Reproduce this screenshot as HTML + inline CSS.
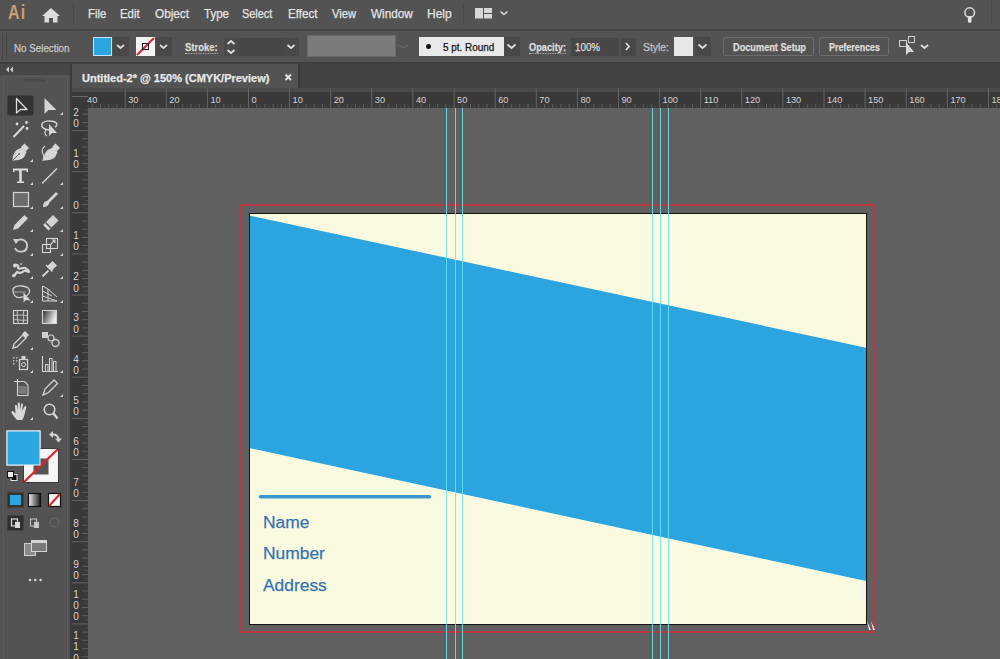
<!DOCTYPE html>
<html><head><meta charset="utf-8">
<style>
*{margin:0;padding:0;box-sizing:border-box}
html,body{width:1000px;height:659px;overflow:hidden;background:#535353;font-family:"Liberation Sans",sans-serif;position:relative}
.a{position:absolute}
.t{position:absolute;white-space:nowrap;color:#e4e4e4;font-size:12px;line-height:14px;-webkit-text-stroke:0.25px currentColor}
.c{font-size:11px;color:#dedede}
.b{font-weight:bold}
.chev{position:absolute;width:16px;height:19px;background:#484848}
.dot{border-bottom:1px dotted #bdbdbd}
</style></head><body>
<!-- ===== MENU BAR ===== -->
<div class="a" style="left:0;top:0;width:1000px;height:29px;background:#535353"></div>
<div class="a" style="left:0;top:29px;width:1000px;height:2px;background:#454545"></div>
<div class="a" style="left:7px;top:1px;width:26px;height:24px;background:#515450"></div>
<div class="t" style="left:8px;top:1px;font-size:21px;line-height:22px;font-weight:bold;color:#cf9c76;-webkit-text-stroke:0;letter-spacing:1.5px;transform:scaleX(0.76);transform-origin:0 0">Ai</div>
<div class="a" style="left:73px;top:3px;width:1px;height:22px;background:#484848"></div>
<div class="t" style="left:88px;top:7px;transform:scaleX(0.94);transform-origin:0 0">File</div>
<div class="t" style="left:120px;top:7px;transform:scaleX(0.95);transform-origin:0 0">Edit</div>
<div class="t" style="left:155px;top:7px;transform:scaleX(0.98);transform-origin:0 0">Object</div>
<div class="t" style="left:204px;top:7px;transform:scaleX(0.96);transform-origin:0 0">Type</div>
<div class="t" style="left:242px;top:7px;transform:scaleX(0.91);transform-origin:0 0">Select</div>
<div class="t" style="left:288px;top:7px;transform:scaleX(0.97);transform-origin:0 0">Effect</div>
<div class="t" style="left:332px;top:7px;transform:scaleX(0.93);transform-origin:0 0">View</div>
<div class="t" style="left:371px;top:7px;transform:scaleX(0.98);transform-origin:0 0">Window</div>
<div class="t" style="left:427px;top:7px">Help</div>
<div class="a" style="left:463px;top:3px;width:1px;height:22px;background:#4a4a4a"></div>
<div class="a" style="left:991px;top:0px;width:1px;height:24px;background:#4a4a4a"></div>
<svg class="a" style="left:0;top:0" width="1000" height="31">
 <!-- home -->
 <path d="M51,8 L60,16 L57.5,16 L57.5,22.5 L53,22.5 L53,18 L49,18 L49,22.5 L44.5,22.5 L44.5,16 L42,16 Z" fill="#dcdcdc"/>
 <!-- workspace -->
 <rect x="475" y="8" width="8" height="10.5" fill="#d8d8d8"/>
 <rect x="484" y="8" width="8" height="5" fill="#d8d8d8"/>
 <rect x="484" y="14" width="8" height="4.5" fill="#d8d8d8"/>
 <path d="M500.5,11.5 L504,14.5 L507.5,11.5" fill="none" stroke="#dcdcdc" stroke-width="1.6"/>
 <!-- bulb -->
 <circle cx="969.7" cy="12.6" r="4.8" fill="none" stroke="#d8d8d8" stroke-width="1.6"/>
 <path d="M966.5,16 L969.7,19 L972.9,16 Z" fill="#d8d8d8"/><rect x="967.9" y="17" width="3.6" height="5.8" rx="1.6" fill="#e4e4e4"/>
</svg>
<!-- ===== CONTROL BAR ===== -->
<div class="a" style="left:0;top:31px;width:1000px;height:31px;background:#535353"></div>
<div class="a" style="left:0;top:62px;width:1000px;height:2px;background:#3f3f3f"></div>
<div class="a" style="left:2px;top:33px;width:1px;height:27px;background:#474747"></div>
<div class="a" style="left:6px;top:33px;width:1px;height:27px;background:#474747"></div>
<div class="t c" style="left:14px;top:41px;color:#c8c8c8;transform:scaleX(0.89);transform-origin:0 0">No Selection</div>
<div class="a" style="left:93px;top:37px;width:19px;height:19px;background:#2ca6e2;border:1px solid #bfe6fa"></div>
<div class="chev" style="left:113px;top:37px"></div>
<div class="a" style="left:136px;top:37px;width:19px;height:19px;background:#f4f4f4"></div>
<svg class="a" style="left:136px;top:37px" width="19" height="19"><line x1="1" y1="18" x2="18" y2="1" stroke="#e0202a" stroke-width="2"/><rect x="6.5" y="6.5" width="6" height="6" fill="none" stroke="#222" stroke-width="1"/></svg>
<div class="chev" style="left:156px;top:37px"></div>
<div class="t c b dot" style="left:185px;top:41px;line-height:12px;transform:scaleX(0.86);transform-origin:0 0">Stroke:</div>
<div class="a" style="left:224px;top:38px;width:15px;height:18px;background:#4a4a4a"></div>
<div class="a" style="left:239px;top:38px;width:44px;height:18px;background:#464646"></div>
<div class="chev" style="left:283px;top:38px;height:18px"></div>
<div class="a" style="left:307px;top:35px;width:89px;height:22px;background:#7b7b7b;border:1px solid #6a6a6a"></div>
<div class="a" style="left:419px;top:37px;width:85px;height:19px;background:#e9e9e9"></div>
<div class="a" style="left:426px;top:44px;width:5px;height:5px;border-radius:50%;background:#111"></div>
<div class="t c" style="left:443px;top:40px;color:#111;transform:scaleX(0.9);transform-origin:0 0">5 pt. Round</div>
<div class="chev" style="left:504px;top:37px"></div>
<div class="t c b dot" style="left:529px;top:41px;line-height:12px;transform:scaleX(0.84);transform-origin:0 0">Opacity:</div>
<div class="a" style="left:571px;top:38px;width:48px;height:18px;background:#474747"></div>
<div class="t c" style="left:575px;top:40px;transform:scaleX(0.89);transform-origin:0 0">100%</div>
<div class="chev" style="left:621px;top:38px;height:18px;width:15px"></div>
<div class="t c" style="left:643px;top:41px;line-height:12px;color:#c4c4c4;transform:scaleX(0.945);transform-origin:0 0">Style:</div>
<div class="a" style="left:674px;top:37px;width:19px;height:19px;background:#e8e8e8"></div>
<div class="chev" style="left:695px;top:37px"></div>
<div class="a" style="left:723px;top:37px;width:91px;height:19px;border:1px solid #6c6c6c;border-radius:2px"></div>
<div class="t c b" style="left:733px;top:40px;transform:scaleX(0.835);transform-origin:0 0">Document Setup</div>
<div class="a" style="left:819px;top:37px;width:70px;height:19px;border:1px solid #6c6c6c;border-radius:2px"></div>
<div class="t c b" style="left:829px;top:40px;transform:scaleX(0.81);transform-origin:0 0">Preferences</div>
<svg class="a" style="left:0;top:31px" width="1000" height="31">
 <g fill="none" stroke="#dcdcdc" stroke-width="1.8">
  <path d="M117,14 L120.5,17 L124,14"/>
  <path d="M160,14 L163.5,17 L167,14"/>
  <path d="M227.5,13 L231,10 L234.5,13"/>
  <path d="M227.5,19 L231,22 L234.5,19"/>
  <path d="M287.5,14 L291,17 L294.5,14"/>
  <path d="M507.5,13.5 L511.5,17 L515.5,13.5"/>
  <path d="M626,12 L629,15.5 L626,19"/>
  <path d="M698.5,13.5 L702.5,17 L706.5,13.5"/>
  <path d="M921,14 L924.5,17 L928,14"/>
 </g>
 <path d="M399,14 L403.5,17 L408,14" fill="none" stroke="#6a6a6a" stroke-width="1.3"/>
 <!-- arrange icon -->
 <g fill="none" stroke="#d0d0d0" stroke-width="1">
  <rect x="899.5" y="9.5" width="7" height="6"/>
  <rect x="908.5" y="5.5" width="6" height="6"/>
 </g>
 <path d="M906,11 L906,24 L909,21 L914,21 Z" fill="#d8d8d8"/>
</svg>
<!-- ===== TAB ROW ===== -->
<div class="a" style="left:0;top:64px;width:1000px;height:28px;background:#424242"></div>
<div class="a" style="left:72px;top:64px;width:226px;height:25px;background:#535353"></div>
<div class="a" style="left:298px;top:64px;width:2px;height:25px;background:#3a3a3a"></div>
<div class="a" style="left:72px;top:88px;width:928px;height:4px;background:#494949"></div>
<div class="t c b" style="left:82px;top:71px;color:#e8e8e8">Untitled-2* @ 150% (CMYK/Preview)</div>
<svg class="a" style="left:284px;top:73px" width="9" height="9"><path d="M1.5,1.5 L7,7 M7,1.5 L1.5,7" stroke="#e8e8e8" stroke-width="1.8"/></svg>
<!-- ===== CANVAS ===== -->
<div class="a" style="left:88px;top:108px;width:912px;height:551px;background:#606060"></div>
<!-- rulers -->
<svg class="a" style="left:0;top:0" width="1000" height="659" font-family="Liberation Sans" font-size="9.2" fill="#d4d4d4">
 <rect x="72" y="92" width="928" height="16" fill="#393939"/>
 <rect x="72" y="92" width="16" height="567" fill="#393939"/>
<line x1="88.2" y1="105.5" x2="88.2" y2="108" stroke="#4c4c4c" stroke-width="1"/>
<line x1="92.3" y1="104" x2="92.3" y2="108" stroke="#5e5e5e" stroke-width="1"/>
<line x1="96.4" y1="105.5" x2="96.4" y2="108" stroke="#4c4c4c" stroke-width="1"/>
<line x1="100.5" y1="104" x2="100.5" y2="108" stroke="#5e5e5e" stroke-width="1"/>
<line x1="104.6" y1="105.5" x2="104.6" y2="108" stroke="#4c4c4c" stroke-width="1"/>
<line x1="108.7" y1="104" x2="108.7" y2="108" stroke="#5e5e5e" stroke-width="1"/>
<line x1="112.8" y1="105.5" x2="112.8" y2="108" stroke="#4c4c4c" stroke-width="1"/>
<line x1="116.9" y1="104" x2="116.9" y2="108" stroke="#5e5e5e" stroke-width="1"/>
<line x1="121.1" y1="105.5" x2="121.1" y2="108" stroke="#4c4c4c" stroke-width="1"/>
<text x="87.1" y="103.2">40</text>
<line x1="125.2" y1="88" x2="125.2" y2="108" stroke="#646464" stroke-width="1"/>
<line x1="129.3" y1="105.5" x2="129.3" y2="108" stroke="#4c4c4c" stroke-width="1"/>
<line x1="133.4" y1="104" x2="133.4" y2="108" stroke="#5e5e5e" stroke-width="1"/>
<line x1="137.5" y1="105.5" x2="137.5" y2="108" stroke="#4c4c4c" stroke-width="1"/>
<line x1="141.6" y1="104" x2="141.6" y2="108" stroke="#5e5e5e" stroke-width="1"/>
<line x1="145.7" y1="105.5" x2="145.7" y2="108" stroke="#4c4c4c" stroke-width="1"/>
<line x1="149.8" y1="104" x2="149.8" y2="108" stroke="#5e5e5e" stroke-width="1"/>
<line x1="153.9" y1="105.5" x2="153.9" y2="108" stroke="#4c4c4c" stroke-width="1"/>
<line x1="158.1" y1="104" x2="158.1" y2="108" stroke="#5e5e5e" stroke-width="1"/>
<line x1="162.2" y1="105.5" x2="162.2" y2="108" stroke="#4c4c4c" stroke-width="1"/>
<text x="128.2" y="103.2">30</text>
<line x1="166.3" y1="88" x2="166.3" y2="108" stroke="#646464" stroke-width="1"/>
<line x1="170.4" y1="105.5" x2="170.4" y2="108" stroke="#4c4c4c" stroke-width="1"/>
<line x1="174.5" y1="104" x2="174.5" y2="108" stroke="#5e5e5e" stroke-width="1"/>
<line x1="178.6" y1="105.5" x2="178.6" y2="108" stroke="#4c4c4c" stroke-width="1"/>
<line x1="182.7" y1="104" x2="182.7" y2="108" stroke="#5e5e5e" stroke-width="1"/>
<line x1="186.8" y1="105.5" x2="186.8" y2="108" stroke="#4c4c4c" stroke-width="1"/>
<line x1="190.9" y1="104" x2="190.9" y2="108" stroke="#5e5e5e" stroke-width="1"/>
<line x1="195.1" y1="105.5" x2="195.1" y2="108" stroke="#4c4c4c" stroke-width="1"/>
<line x1="199.2" y1="104" x2="199.2" y2="108" stroke="#5e5e5e" stroke-width="1"/>
<line x1="203.3" y1="105.5" x2="203.3" y2="108" stroke="#4c4c4c" stroke-width="1"/>
<text x="169.3" y="103.2">20</text>
<line x1="207.4" y1="88" x2="207.4" y2="108" stroke="#646464" stroke-width="1"/>
<line x1="211.5" y1="105.5" x2="211.5" y2="108" stroke="#4c4c4c" stroke-width="1"/>
<line x1="215.6" y1="104" x2="215.6" y2="108" stroke="#5e5e5e" stroke-width="1"/>
<line x1="219.7" y1="105.5" x2="219.7" y2="108" stroke="#4c4c4c" stroke-width="1"/>
<line x1="223.8" y1="104" x2="223.8" y2="108" stroke="#5e5e5e" stroke-width="1"/>
<line x1="227.9" y1="105.5" x2="227.9" y2="108" stroke="#4c4c4c" stroke-width="1"/>
<line x1="232.1" y1="104" x2="232.1" y2="108" stroke="#5e5e5e" stroke-width="1"/>
<line x1="236.2" y1="105.5" x2="236.2" y2="108" stroke="#4c4c4c" stroke-width="1"/>
<line x1="240.3" y1="104" x2="240.3" y2="108" stroke="#5e5e5e" stroke-width="1"/>
<line x1="244.4" y1="105.5" x2="244.4" y2="108" stroke="#4c4c4c" stroke-width="1"/>
<text x="210.4" y="103.2">10</text>
<line x1="248.5" y1="88" x2="248.5" y2="108" stroke="#646464" stroke-width="1"/>
<line x1="252.6" y1="105.5" x2="252.6" y2="108" stroke="#4c4c4c" stroke-width="1"/>
<line x1="256.7" y1="104" x2="256.7" y2="108" stroke="#5e5e5e" stroke-width="1"/>
<line x1="260.8" y1="105.5" x2="260.8" y2="108" stroke="#4c4c4c" stroke-width="1"/>
<line x1="264.9" y1="104" x2="264.9" y2="108" stroke="#5e5e5e" stroke-width="1"/>
<line x1="269.1" y1="105.5" x2="269.1" y2="108" stroke="#4c4c4c" stroke-width="1"/>
<line x1="273.2" y1="104" x2="273.2" y2="108" stroke="#5e5e5e" stroke-width="1"/>
<line x1="277.3" y1="105.5" x2="277.3" y2="108" stroke="#4c4c4c" stroke-width="1"/>
<line x1="281.4" y1="104" x2="281.4" y2="108" stroke="#5e5e5e" stroke-width="1"/>
<line x1="285.5" y1="105.5" x2="285.5" y2="108" stroke="#4c4c4c" stroke-width="1"/>
<text x="251.5" y="103.2">0</text>
<line x1="289.6" y1="88" x2="289.6" y2="108" stroke="#646464" stroke-width="1"/>
<line x1="293.7" y1="105.5" x2="293.7" y2="108" stroke="#4c4c4c" stroke-width="1"/>
<line x1="297.8" y1="104" x2="297.8" y2="108" stroke="#5e5e5e" stroke-width="1"/>
<line x1="301.9" y1="105.5" x2="301.9" y2="108" stroke="#4c4c4c" stroke-width="1"/>
<line x1="306.1" y1="104" x2="306.1" y2="108" stroke="#5e5e5e" stroke-width="1"/>
<line x1="310.2" y1="105.5" x2="310.2" y2="108" stroke="#4c4c4c" stroke-width="1"/>
<line x1="314.3" y1="104" x2="314.3" y2="108" stroke="#5e5e5e" stroke-width="1"/>
<line x1="318.4" y1="105.5" x2="318.4" y2="108" stroke="#4c4c4c" stroke-width="1"/>
<line x1="322.5" y1="104" x2="322.5" y2="108" stroke="#5e5e5e" stroke-width="1"/>
<line x1="326.6" y1="105.5" x2="326.6" y2="108" stroke="#4c4c4c" stroke-width="1"/>
<text x="292.6" y="103.2">10</text>
<line x1="330.7" y1="88" x2="330.7" y2="108" stroke="#646464" stroke-width="1"/>
<line x1="334.8" y1="105.5" x2="334.8" y2="108" stroke="#4c4c4c" stroke-width="1"/>
<line x1="338.9" y1="104" x2="338.9" y2="108" stroke="#5e5e5e" stroke-width="1"/>
<line x1="343.1" y1="105.5" x2="343.1" y2="108" stroke="#4c4c4c" stroke-width="1"/>
<line x1="347.2" y1="104" x2="347.2" y2="108" stroke="#5e5e5e" stroke-width="1"/>
<line x1="351.3" y1="105.5" x2="351.3" y2="108" stroke="#4c4c4c" stroke-width="1"/>
<line x1="355.4" y1="104" x2="355.4" y2="108" stroke="#5e5e5e" stroke-width="1"/>
<line x1="359.5" y1="105.5" x2="359.5" y2="108" stroke="#4c4c4c" stroke-width="1"/>
<line x1="363.6" y1="104" x2="363.6" y2="108" stroke="#5e5e5e" stroke-width="1"/>
<line x1="367.7" y1="105.5" x2="367.7" y2="108" stroke="#4c4c4c" stroke-width="1"/>
<text x="333.7" y="103.2">20</text>
<line x1="371.8" y1="88" x2="371.8" y2="108" stroke="#646464" stroke-width="1"/>
<line x1="375.9" y1="105.5" x2="375.9" y2="108" stroke="#4c4c4c" stroke-width="1"/>
<line x1="380.1" y1="104" x2="380.1" y2="108" stroke="#5e5e5e" stroke-width="1"/>
<line x1="384.2" y1="105.5" x2="384.2" y2="108" stroke="#4c4c4c" stroke-width="1"/>
<line x1="388.3" y1="104" x2="388.3" y2="108" stroke="#5e5e5e" stroke-width="1"/>
<line x1="392.4" y1="105.5" x2="392.4" y2="108" stroke="#4c4c4c" stroke-width="1"/>
<line x1="396.5" y1="104" x2="396.5" y2="108" stroke="#5e5e5e" stroke-width="1"/>
<line x1="400.6" y1="105.5" x2="400.6" y2="108" stroke="#4c4c4c" stroke-width="1"/>
<line x1="404.7" y1="104" x2="404.7" y2="108" stroke="#5e5e5e" stroke-width="1"/>
<line x1="408.8" y1="105.5" x2="408.8" y2="108" stroke="#4c4c4c" stroke-width="1"/>
<text x="374.8" y="103.2">30</text>
<line x1="412.9" y1="88" x2="412.9" y2="108" stroke="#646464" stroke-width="1"/>
<line x1="417.1" y1="105.5" x2="417.1" y2="108" stroke="#4c4c4c" stroke-width="1"/>
<line x1="421.2" y1="104" x2="421.2" y2="108" stroke="#5e5e5e" stroke-width="1"/>
<line x1="425.3" y1="105.5" x2="425.3" y2="108" stroke="#4c4c4c" stroke-width="1"/>
<line x1="429.4" y1="104" x2="429.4" y2="108" stroke="#5e5e5e" stroke-width="1"/>
<line x1="433.5" y1="105.5" x2="433.5" y2="108" stroke="#4c4c4c" stroke-width="1"/>
<line x1="437.6" y1="104" x2="437.6" y2="108" stroke="#5e5e5e" stroke-width="1"/>
<line x1="441.7" y1="105.5" x2="441.7" y2="108" stroke="#4c4c4c" stroke-width="1"/>
<line x1="445.8" y1="104" x2="445.8" y2="108" stroke="#5e5e5e" stroke-width="1"/>
<line x1="449.9" y1="105.5" x2="449.9" y2="108" stroke="#4c4c4c" stroke-width="1"/>
<text x="415.9" y="103.2">40</text>
<line x1="454.1" y1="88" x2="454.1" y2="108" stroke="#646464" stroke-width="1"/>
<line x1="458.2" y1="105.5" x2="458.2" y2="108" stroke="#4c4c4c" stroke-width="1"/>
<line x1="462.3" y1="104" x2="462.3" y2="108" stroke="#5e5e5e" stroke-width="1"/>
<line x1="466.4" y1="105.5" x2="466.4" y2="108" stroke="#4c4c4c" stroke-width="1"/>
<line x1="470.5" y1="104" x2="470.5" y2="108" stroke="#5e5e5e" stroke-width="1"/>
<line x1="474.6" y1="105.5" x2="474.6" y2="108" stroke="#4c4c4c" stroke-width="1"/>
<line x1="478.7" y1="104" x2="478.7" y2="108" stroke="#5e5e5e" stroke-width="1"/>
<line x1="482.8" y1="105.5" x2="482.8" y2="108" stroke="#4c4c4c" stroke-width="1"/>
<line x1="486.9" y1="104" x2="486.9" y2="108" stroke="#5e5e5e" stroke-width="1"/>
<line x1="491.0" y1="105.5" x2="491.0" y2="108" stroke="#4c4c4c" stroke-width="1"/>
<text x="457.1" y="103.2">50</text>
<line x1="495.2" y1="88" x2="495.2" y2="108" stroke="#646464" stroke-width="1"/>
<line x1="499.3" y1="105.5" x2="499.3" y2="108" stroke="#4c4c4c" stroke-width="1"/>
<line x1="503.4" y1="104" x2="503.4" y2="108" stroke="#5e5e5e" stroke-width="1"/>
<line x1="507.5" y1="105.5" x2="507.5" y2="108" stroke="#4c4c4c" stroke-width="1"/>
<line x1="511.6" y1="104" x2="511.6" y2="108" stroke="#5e5e5e" stroke-width="1"/>
<line x1="515.7" y1="105.5" x2="515.7" y2="108" stroke="#4c4c4c" stroke-width="1"/>
<line x1="519.8" y1="104" x2="519.8" y2="108" stroke="#5e5e5e" stroke-width="1"/>
<line x1="523.9" y1="105.5" x2="523.9" y2="108" stroke="#4c4c4c" stroke-width="1"/>
<line x1="528.0" y1="104" x2="528.0" y2="108" stroke="#5e5e5e" stroke-width="1"/>
<line x1="532.2" y1="105.5" x2="532.2" y2="108" stroke="#4c4c4c" stroke-width="1"/>
<text x="498.2" y="103.2">60</text>
<line x1="536.3" y1="88" x2="536.3" y2="108" stroke="#646464" stroke-width="1"/>
<line x1="540.4" y1="105.5" x2="540.4" y2="108" stroke="#4c4c4c" stroke-width="1"/>
<line x1="544.5" y1="104" x2="544.5" y2="108" stroke="#5e5e5e" stroke-width="1"/>
<line x1="548.6" y1="105.5" x2="548.6" y2="108" stroke="#4c4c4c" stroke-width="1"/>
<line x1="552.7" y1="104" x2="552.7" y2="108" stroke="#5e5e5e" stroke-width="1"/>
<line x1="556.8" y1="105.5" x2="556.8" y2="108" stroke="#4c4c4c" stroke-width="1"/>
<line x1="560.9" y1="104" x2="560.9" y2="108" stroke="#5e5e5e" stroke-width="1"/>
<line x1="565.0" y1="105.5" x2="565.0" y2="108" stroke="#4c4c4c" stroke-width="1"/>
<line x1="569.2" y1="104" x2="569.2" y2="108" stroke="#5e5e5e" stroke-width="1"/>
<line x1="573.3" y1="105.5" x2="573.3" y2="108" stroke="#4c4c4c" stroke-width="1"/>
<text x="539.3" y="103.2">70</text>
<line x1="577.4" y1="88" x2="577.4" y2="108" stroke="#646464" stroke-width="1"/>
<line x1="581.5" y1="105.5" x2="581.5" y2="108" stroke="#4c4c4c" stroke-width="1"/>
<line x1="585.6" y1="104" x2="585.6" y2="108" stroke="#5e5e5e" stroke-width="1"/>
<line x1="589.7" y1="105.5" x2="589.7" y2="108" stroke="#4c4c4c" stroke-width="1"/>
<line x1="593.8" y1="104" x2="593.8" y2="108" stroke="#5e5e5e" stroke-width="1"/>
<line x1="597.9" y1="105.5" x2="597.9" y2="108" stroke="#4c4c4c" stroke-width="1"/>
<line x1="602.0" y1="104" x2="602.0" y2="108" stroke="#5e5e5e" stroke-width="1"/>
<line x1="606.2" y1="105.5" x2="606.2" y2="108" stroke="#4c4c4c" stroke-width="1"/>
<line x1="610.3" y1="104" x2="610.3" y2="108" stroke="#5e5e5e" stroke-width="1"/>
<line x1="614.4" y1="105.5" x2="614.4" y2="108" stroke="#4c4c4c" stroke-width="1"/>
<text x="580.4" y="103.2">80</text>
<line x1="618.5" y1="88" x2="618.5" y2="108" stroke="#646464" stroke-width="1"/>
<line x1="622.6" y1="105.5" x2="622.6" y2="108" stroke="#4c4c4c" stroke-width="1"/>
<line x1="626.7" y1="104" x2="626.7" y2="108" stroke="#5e5e5e" stroke-width="1"/>
<line x1="630.8" y1="105.5" x2="630.8" y2="108" stroke="#4c4c4c" stroke-width="1"/>
<line x1="634.9" y1="104" x2="634.9" y2="108" stroke="#5e5e5e" stroke-width="1"/>
<line x1="639.0" y1="105.5" x2="639.0" y2="108" stroke="#4c4c4c" stroke-width="1"/>
<line x1="643.2" y1="104" x2="643.2" y2="108" stroke="#5e5e5e" stroke-width="1"/>
<line x1="647.3" y1="105.5" x2="647.3" y2="108" stroke="#4c4c4c" stroke-width="1"/>
<line x1="651.4" y1="104" x2="651.4" y2="108" stroke="#5e5e5e" stroke-width="1"/>
<line x1="655.5" y1="105.5" x2="655.5" y2="108" stroke="#4c4c4c" stroke-width="1"/>
<text x="621.5" y="103.2">90</text>
<line x1="659.6" y1="88" x2="659.6" y2="108" stroke="#646464" stroke-width="1"/>
<line x1="663.7" y1="105.5" x2="663.7" y2="108" stroke="#4c4c4c" stroke-width="1"/>
<line x1="667.8" y1="104" x2="667.8" y2="108" stroke="#5e5e5e" stroke-width="1"/>
<line x1="671.9" y1="105.5" x2="671.9" y2="108" stroke="#4c4c4c" stroke-width="1"/>
<line x1="676.0" y1="104" x2="676.0" y2="108" stroke="#5e5e5e" stroke-width="1"/>
<line x1="680.2" y1="105.5" x2="680.2" y2="108" stroke="#4c4c4c" stroke-width="1"/>
<line x1="684.3" y1="104" x2="684.3" y2="108" stroke="#5e5e5e" stroke-width="1"/>
<line x1="688.4" y1="105.5" x2="688.4" y2="108" stroke="#4c4c4c" stroke-width="1"/>
<line x1="692.5" y1="104" x2="692.5" y2="108" stroke="#5e5e5e" stroke-width="1"/>
<line x1="696.6" y1="105.5" x2="696.6" y2="108" stroke="#4c4c4c" stroke-width="1"/>
<text x="662.6" y="103.2">100</text>
<line x1="700.7" y1="88" x2="700.7" y2="108" stroke="#646464" stroke-width="1"/>
<line x1="704.8" y1="105.5" x2="704.8" y2="108" stroke="#4c4c4c" stroke-width="1"/>
<line x1="708.9" y1="104" x2="708.9" y2="108" stroke="#5e5e5e" stroke-width="1"/>
<line x1="713.0" y1="105.5" x2="713.0" y2="108" stroke="#4c4c4c" stroke-width="1"/>
<line x1="717.2" y1="104" x2="717.2" y2="108" stroke="#5e5e5e" stroke-width="1"/>
<line x1="721.3" y1="105.5" x2="721.3" y2="108" stroke="#4c4c4c" stroke-width="1"/>
<line x1="725.4" y1="104" x2="725.4" y2="108" stroke="#5e5e5e" stroke-width="1"/>
<line x1="729.5" y1="105.5" x2="729.5" y2="108" stroke="#4c4c4c" stroke-width="1"/>
<line x1="733.6" y1="104" x2="733.6" y2="108" stroke="#5e5e5e" stroke-width="1"/>
<line x1="737.7" y1="105.5" x2="737.7" y2="108" stroke="#4c4c4c" stroke-width="1"/>
<text x="703.7" y="103.2">110</text>
<line x1="741.8" y1="88" x2="741.8" y2="108" stroke="#646464" stroke-width="1"/>
<line x1="745.9" y1="105.5" x2="745.9" y2="108" stroke="#4c4c4c" stroke-width="1"/>
<line x1="750.0" y1="104" x2="750.0" y2="108" stroke="#5e5e5e" stroke-width="1"/>
<line x1="754.2" y1="105.5" x2="754.2" y2="108" stroke="#4c4c4c" stroke-width="1"/>
<line x1="758.3" y1="104" x2="758.3" y2="108" stroke="#5e5e5e" stroke-width="1"/>
<line x1="762.4" y1="105.5" x2="762.4" y2="108" stroke="#4c4c4c" stroke-width="1"/>
<line x1="766.5" y1="104" x2="766.5" y2="108" stroke="#5e5e5e" stroke-width="1"/>
<line x1="770.6" y1="105.5" x2="770.6" y2="108" stroke="#4c4c4c" stroke-width="1"/>
<line x1="774.7" y1="104" x2="774.7" y2="108" stroke="#5e5e5e" stroke-width="1"/>
<line x1="778.8" y1="105.5" x2="778.8" y2="108" stroke="#4c4c4c" stroke-width="1"/>
<text x="744.8" y="103.2">120</text>
<line x1="782.9" y1="88" x2="782.9" y2="108" stroke="#646464" stroke-width="1"/>
<line x1="787.0" y1="105.5" x2="787.0" y2="108" stroke="#4c4c4c" stroke-width="1"/>
<line x1="791.2" y1="104" x2="791.2" y2="108" stroke="#5e5e5e" stroke-width="1"/>
<line x1="795.3" y1="105.5" x2="795.3" y2="108" stroke="#4c4c4c" stroke-width="1"/>
<line x1="799.4" y1="104" x2="799.4" y2="108" stroke="#5e5e5e" stroke-width="1"/>
<line x1="803.5" y1="105.5" x2="803.5" y2="108" stroke="#4c4c4c" stroke-width="1"/>
<line x1="807.6" y1="104" x2="807.6" y2="108" stroke="#5e5e5e" stroke-width="1"/>
<line x1="811.7" y1="105.5" x2="811.7" y2="108" stroke="#4c4c4c" stroke-width="1"/>
<line x1="815.8" y1="104" x2="815.8" y2="108" stroke="#5e5e5e" stroke-width="1"/>
<line x1="819.9" y1="105.5" x2="819.9" y2="108" stroke="#4c4c4c" stroke-width="1"/>
<text x="785.9" y="103.2">130</text>
<line x1="824.0" y1="88" x2="824.0" y2="108" stroke="#646464" stroke-width="1"/>
<line x1="828.2" y1="105.5" x2="828.2" y2="108" stroke="#4c4c4c" stroke-width="1"/>
<line x1="832.3" y1="104" x2="832.3" y2="108" stroke="#5e5e5e" stroke-width="1"/>
<line x1="836.4" y1="105.5" x2="836.4" y2="108" stroke="#4c4c4c" stroke-width="1"/>
<line x1="840.5" y1="104" x2="840.5" y2="108" stroke="#5e5e5e" stroke-width="1"/>
<line x1="844.6" y1="105.5" x2="844.6" y2="108" stroke="#4c4c4c" stroke-width="1"/>
<line x1="848.7" y1="104" x2="848.7" y2="108" stroke="#5e5e5e" stroke-width="1"/>
<line x1="852.8" y1="105.5" x2="852.8" y2="108" stroke="#4c4c4c" stroke-width="1"/>
<line x1="856.9" y1="104" x2="856.9" y2="108" stroke="#5e5e5e" stroke-width="1"/>
<line x1="861.0" y1="105.5" x2="861.0" y2="108" stroke="#4c4c4c" stroke-width="1"/>
<text x="827.0" y="103.2">140</text>
<line x1="865.1" y1="88" x2="865.1" y2="108" stroke="#646464" stroke-width="1"/>
<line x1="869.3" y1="105.5" x2="869.3" y2="108" stroke="#4c4c4c" stroke-width="1"/>
<line x1="873.4" y1="104" x2="873.4" y2="108" stroke="#5e5e5e" stroke-width="1"/>
<line x1="877.5" y1="105.5" x2="877.5" y2="108" stroke="#4c4c4c" stroke-width="1"/>
<line x1="881.6" y1="104" x2="881.6" y2="108" stroke="#5e5e5e" stroke-width="1"/>
<line x1="885.7" y1="105.5" x2="885.7" y2="108" stroke="#4c4c4c" stroke-width="1"/>
<line x1="889.8" y1="104" x2="889.8" y2="108" stroke="#5e5e5e" stroke-width="1"/>
<line x1="893.9" y1="105.5" x2="893.9" y2="108" stroke="#4c4c4c" stroke-width="1"/>
<line x1="898.0" y1="104" x2="898.0" y2="108" stroke="#5e5e5e" stroke-width="1"/>
<line x1="902.1" y1="105.5" x2="902.1" y2="108" stroke="#4c4c4c" stroke-width="1"/>
<text x="868.1" y="103.2">150</text>
<line x1="906.3" y1="88" x2="906.3" y2="108" stroke="#646464" stroke-width="1"/>
<line x1="910.4" y1="105.5" x2="910.4" y2="108" stroke="#4c4c4c" stroke-width="1"/>
<line x1="914.5" y1="104" x2="914.5" y2="108" stroke="#5e5e5e" stroke-width="1"/>
<line x1="918.6" y1="105.5" x2="918.6" y2="108" stroke="#4c4c4c" stroke-width="1"/>
<line x1="922.7" y1="104" x2="922.7" y2="108" stroke="#5e5e5e" stroke-width="1"/>
<line x1="926.8" y1="105.5" x2="926.8" y2="108" stroke="#4c4c4c" stroke-width="1"/>
<line x1="930.9" y1="104" x2="930.9" y2="108" stroke="#5e5e5e" stroke-width="1"/>
<line x1="935.0" y1="105.5" x2="935.0" y2="108" stroke="#4c4c4c" stroke-width="1"/>
<line x1="939.1" y1="104" x2="939.1" y2="108" stroke="#5e5e5e" stroke-width="1"/>
<line x1="943.3" y1="105.5" x2="943.3" y2="108" stroke="#4c4c4c" stroke-width="1"/>
<text x="909.3" y="103.2">160</text>
<line x1="947.4" y1="88" x2="947.4" y2="108" stroke="#646464" stroke-width="1"/>
<line x1="951.5" y1="105.5" x2="951.5" y2="108" stroke="#4c4c4c" stroke-width="1"/>
<line x1="955.6" y1="104" x2="955.6" y2="108" stroke="#5e5e5e" stroke-width="1"/>
<line x1="959.7" y1="105.5" x2="959.7" y2="108" stroke="#4c4c4c" stroke-width="1"/>
<line x1="963.8" y1="104" x2="963.8" y2="108" stroke="#5e5e5e" stroke-width="1"/>
<line x1="967.9" y1="105.5" x2="967.9" y2="108" stroke="#4c4c4c" stroke-width="1"/>
<line x1="972.0" y1="104" x2="972.0" y2="108" stroke="#5e5e5e" stroke-width="1"/>
<line x1="976.1" y1="105.5" x2="976.1" y2="108" stroke="#4c4c4c" stroke-width="1"/>
<line x1="980.3" y1="104" x2="980.3" y2="108" stroke="#5e5e5e" stroke-width="1"/>
<line x1="984.4" y1="105.5" x2="984.4" y2="108" stroke="#4c4c4c" stroke-width="1"/>
<text x="950.4" y="103.2">170</text>
<line x1="988.5" y1="88" x2="988.5" y2="108" stroke="#646464" stroke-width="1"/>
<line x1="992.6" y1="105.5" x2="992.6" y2="108" stroke="#4c4c4c" stroke-width="1"/>
<line x1="996.7" y1="104" x2="996.7" y2="108" stroke="#5e5e5e" stroke-width="1"/>
<text x="991.5" y="103.2">180</text>
<line x1="85" y1="110.0" x2="88" y2="110.0" stroke="#4c4c4c" stroke-width="1"/>
<line x1="82" y1="114.1" x2="88" y2="114.1" stroke="#5e5e5e" stroke-width="1"/>
<line x1="85" y1="118.2" x2="88" y2="118.2" stroke="#4c4c4c" stroke-width="1"/>
<line x1="82" y1="122.4" x2="88" y2="122.4" stroke="#5e5e5e" stroke-width="1"/>
<line x1="85" y1="126.5" x2="88" y2="126.5" stroke="#4c4c4c" stroke-width="1"/>
<line x1="72" y1="130.6" x2="88" y2="130.6" stroke="#646464" stroke-width="1"/>
<line x1="85" y1="134.7" x2="88" y2="134.7" stroke="#4c4c4c" stroke-width="1"/>
<line x1="82" y1="138.8" x2="88" y2="138.8" stroke="#5e5e5e" stroke-width="1"/>
<line x1="85" y1="142.9" x2="88" y2="142.9" stroke="#4c4c4c" stroke-width="1"/>
<line x1="82" y1="147.0" x2="88" y2="147.0" stroke="#5e5e5e" stroke-width="1"/>
<line x1="85" y1="151.1" x2="88" y2="151.1" stroke="#4c4c4c" stroke-width="1"/>
<line x1="82" y1="155.2" x2="88" y2="155.2" stroke="#5e5e5e" stroke-width="1"/>
<line x1="85" y1="159.4" x2="88" y2="159.4" stroke="#4c4c4c" stroke-width="1"/>
<line x1="82" y1="163.5" x2="88" y2="163.5" stroke="#5e5e5e" stroke-width="1"/>
<line x1="85" y1="167.6" x2="88" y2="167.6" stroke="#4c4c4c" stroke-width="1"/>
<text x="73.3" y="115.9" font-size="10">2</text>
<text x="73.3" y="127.1" font-size="10">0</text>
<line x1="72" y1="171.7" x2="88" y2="171.7" stroke="#646464" stroke-width="1"/>
<line x1="85" y1="175.8" x2="88" y2="175.8" stroke="#4c4c4c" stroke-width="1"/>
<line x1="82" y1="179.9" x2="88" y2="179.9" stroke="#5e5e5e" stroke-width="1"/>
<line x1="85" y1="184.0" x2="88" y2="184.0" stroke="#4c4c4c" stroke-width="1"/>
<line x1="82" y1="188.1" x2="88" y2="188.1" stroke="#5e5e5e" stroke-width="1"/>
<line x1="85" y1="192.2" x2="88" y2="192.2" stroke="#4c4c4c" stroke-width="1"/>
<line x1="82" y1="196.4" x2="88" y2="196.4" stroke="#5e5e5e" stroke-width="1"/>
<line x1="85" y1="200.5" x2="88" y2="200.5" stroke="#4c4c4c" stroke-width="1"/>
<line x1="82" y1="204.6" x2="88" y2="204.6" stroke="#5e5e5e" stroke-width="1"/>
<line x1="85" y1="208.7" x2="88" y2="208.7" stroke="#4c4c4c" stroke-width="1"/>
<text x="73.3" y="157.0" font-size="10">1</text>
<text x="73.3" y="168.2" font-size="10">0</text>
<line x1="72" y1="212.8" x2="88" y2="212.8" stroke="#646464" stroke-width="1"/>
<line x1="85" y1="216.9" x2="88" y2="216.9" stroke="#4c4c4c" stroke-width="1"/>
<line x1="82" y1="221.0" x2="88" y2="221.0" stroke="#5e5e5e" stroke-width="1"/>
<line x1="85" y1="225.1" x2="88" y2="225.1" stroke="#4c4c4c" stroke-width="1"/>
<line x1="82" y1="229.2" x2="88" y2="229.2" stroke="#5e5e5e" stroke-width="1"/>
<line x1="85" y1="233.4" x2="88" y2="233.4" stroke="#4c4c4c" stroke-width="1"/>
<line x1="82" y1="237.5" x2="88" y2="237.5" stroke="#5e5e5e" stroke-width="1"/>
<line x1="85" y1="241.6" x2="88" y2="241.6" stroke="#4c4c4c" stroke-width="1"/>
<line x1="82" y1="245.7" x2="88" y2="245.7" stroke="#5e5e5e" stroke-width="1"/>
<line x1="85" y1="249.8" x2="88" y2="249.8" stroke="#4c4c4c" stroke-width="1"/>
<text x="73.3" y="209.3" font-size="10">0</text>
<line x1="72" y1="253.9" x2="88" y2="253.9" stroke="#646464" stroke-width="1"/>
<line x1="85" y1="258.0" x2="88" y2="258.0" stroke="#4c4c4c" stroke-width="1"/>
<line x1="82" y1="262.1" x2="88" y2="262.1" stroke="#5e5e5e" stroke-width="1"/>
<line x1="85" y1="266.2" x2="88" y2="266.2" stroke="#4c4c4c" stroke-width="1"/>
<line x1="82" y1="270.4" x2="88" y2="270.4" stroke="#5e5e5e" stroke-width="1"/>
<line x1="85" y1="274.5" x2="88" y2="274.5" stroke="#4c4c4c" stroke-width="1"/>
<line x1="82" y1="278.6" x2="88" y2="278.6" stroke="#5e5e5e" stroke-width="1"/>
<line x1="85" y1="282.7" x2="88" y2="282.7" stroke="#4c4c4c" stroke-width="1"/>
<line x1="82" y1="286.8" x2="88" y2="286.8" stroke="#5e5e5e" stroke-width="1"/>
<line x1="85" y1="290.9" x2="88" y2="290.9" stroke="#4c4c4c" stroke-width="1"/>
<text x="73.3" y="239.2" font-size="10">1</text>
<text x="73.3" y="250.4" font-size="10">0</text>
<line x1="72" y1="295.0" x2="88" y2="295.0" stroke="#646464" stroke-width="1"/>
<line x1="85" y1="299.1" x2="88" y2="299.1" stroke="#4c4c4c" stroke-width="1"/>
<line x1="82" y1="303.2" x2="88" y2="303.2" stroke="#5e5e5e" stroke-width="1"/>
<line x1="85" y1="307.4" x2="88" y2="307.4" stroke="#4c4c4c" stroke-width="1"/>
<line x1="82" y1="311.5" x2="88" y2="311.5" stroke="#5e5e5e" stroke-width="1"/>
<line x1="85" y1="315.6" x2="88" y2="315.6" stroke="#4c4c4c" stroke-width="1"/>
<line x1="82" y1="319.7" x2="88" y2="319.7" stroke="#5e5e5e" stroke-width="1"/>
<line x1="85" y1="323.8" x2="88" y2="323.8" stroke="#4c4c4c" stroke-width="1"/>
<line x1="82" y1="327.9" x2="88" y2="327.9" stroke="#5e5e5e" stroke-width="1"/>
<line x1="85" y1="332.0" x2="88" y2="332.0" stroke="#4c4c4c" stroke-width="1"/>
<text x="73.3" y="280.3" font-size="10">2</text>
<text x="73.3" y="291.5" font-size="10">0</text>
<line x1="72" y1="336.1" x2="88" y2="336.1" stroke="#646464" stroke-width="1"/>
<line x1="85" y1="340.2" x2="88" y2="340.2" stroke="#4c4c4c" stroke-width="1"/>
<line x1="82" y1="344.4" x2="88" y2="344.4" stroke="#5e5e5e" stroke-width="1"/>
<line x1="85" y1="348.5" x2="88" y2="348.5" stroke="#4c4c4c" stroke-width="1"/>
<line x1="82" y1="352.6" x2="88" y2="352.6" stroke="#5e5e5e" stroke-width="1"/>
<line x1="85" y1="356.7" x2="88" y2="356.7" stroke="#4c4c4c" stroke-width="1"/>
<line x1="82" y1="360.8" x2="88" y2="360.8" stroke="#5e5e5e" stroke-width="1"/>
<line x1="85" y1="364.9" x2="88" y2="364.9" stroke="#4c4c4c" stroke-width="1"/>
<line x1="82" y1="369.0" x2="88" y2="369.0" stroke="#5e5e5e" stroke-width="1"/>
<line x1="85" y1="373.1" x2="88" y2="373.1" stroke="#4c4c4c" stroke-width="1"/>
<text x="73.3" y="321.4" font-size="10">3</text>
<text x="73.3" y="332.6" font-size="10">0</text>
<line x1="72" y1="377.2" x2="88" y2="377.2" stroke="#646464" stroke-width="1"/>
<line x1="85" y1="381.4" x2="88" y2="381.4" stroke="#4c4c4c" stroke-width="1"/>
<line x1="82" y1="385.5" x2="88" y2="385.5" stroke="#5e5e5e" stroke-width="1"/>
<line x1="85" y1="389.6" x2="88" y2="389.6" stroke="#4c4c4c" stroke-width="1"/>
<line x1="82" y1="393.7" x2="88" y2="393.7" stroke="#5e5e5e" stroke-width="1"/>
<line x1="85" y1="397.8" x2="88" y2="397.8" stroke="#4c4c4c" stroke-width="1"/>
<line x1="82" y1="401.9" x2="88" y2="401.9" stroke="#5e5e5e" stroke-width="1"/>
<line x1="85" y1="406.0" x2="88" y2="406.0" stroke="#4c4c4c" stroke-width="1"/>
<line x1="82" y1="410.1" x2="88" y2="410.1" stroke="#5e5e5e" stroke-width="1"/>
<line x1="85" y1="414.2" x2="88" y2="414.2" stroke="#4c4c4c" stroke-width="1"/>
<text x="73.3" y="362.5" font-size="10">4</text>
<text x="73.3" y="373.7" font-size="10">0</text>
<line x1="72" y1="418.4" x2="88" y2="418.4" stroke="#646464" stroke-width="1"/>
<line x1="85" y1="422.5" x2="88" y2="422.5" stroke="#4c4c4c" stroke-width="1"/>
<line x1="82" y1="426.6" x2="88" y2="426.6" stroke="#5e5e5e" stroke-width="1"/>
<line x1="85" y1="430.7" x2="88" y2="430.7" stroke="#4c4c4c" stroke-width="1"/>
<line x1="82" y1="434.8" x2="88" y2="434.8" stroke="#5e5e5e" stroke-width="1"/>
<line x1="85" y1="438.9" x2="88" y2="438.9" stroke="#4c4c4c" stroke-width="1"/>
<line x1="82" y1="443.0" x2="88" y2="443.0" stroke="#5e5e5e" stroke-width="1"/>
<line x1="85" y1="447.1" x2="88" y2="447.1" stroke="#4c4c4c" stroke-width="1"/>
<line x1="82" y1="451.2" x2="88" y2="451.2" stroke="#5e5e5e" stroke-width="1"/>
<line x1="85" y1="455.3" x2="88" y2="455.3" stroke="#4c4c4c" stroke-width="1"/>
<text x="73.3" y="403.7" font-size="10">5</text>
<text x="73.3" y="414.9" font-size="10">0</text>
<line x1="72" y1="459.5" x2="88" y2="459.5" stroke="#646464" stroke-width="1"/>
<line x1="85" y1="463.6" x2="88" y2="463.6" stroke="#4c4c4c" stroke-width="1"/>
<line x1="82" y1="467.7" x2="88" y2="467.7" stroke="#5e5e5e" stroke-width="1"/>
<line x1="85" y1="471.8" x2="88" y2="471.8" stroke="#4c4c4c" stroke-width="1"/>
<line x1="82" y1="475.9" x2="88" y2="475.9" stroke="#5e5e5e" stroke-width="1"/>
<line x1="85" y1="480.0" x2="88" y2="480.0" stroke="#4c4c4c" stroke-width="1"/>
<line x1="82" y1="484.1" x2="88" y2="484.1" stroke="#5e5e5e" stroke-width="1"/>
<line x1="85" y1="488.2" x2="88" y2="488.2" stroke="#4c4c4c" stroke-width="1"/>
<line x1="82" y1="492.3" x2="88" y2="492.3" stroke="#5e5e5e" stroke-width="1"/>
<line x1="85" y1="496.5" x2="88" y2="496.5" stroke="#4c4c4c" stroke-width="1"/>
<text x="73.3" y="444.8" font-size="10">6</text>
<text x="73.3" y="456.0" font-size="10">0</text>
<line x1="72" y1="500.6" x2="88" y2="500.6" stroke="#646464" stroke-width="1"/>
<line x1="85" y1="504.7" x2="88" y2="504.7" stroke="#4c4c4c" stroke-width="1"/>
<line x1="82" y1="508.8" x2="88" y2="508.8" stroke="#5e5e5e" stroke-width="1"/>
<line x1="85" y1="512.9" x2="88" y2="512.9" stroke="#4c4c4c" stroke-width="1"/>
<line x1="82" y1="517.0" x2="88" y2="517.0" stroke="#5e5e5e" stroke-width="1"/>
<line x1="85" y1="521.1" x2="88" y2="521.1" stroke="#4c4c4c" stroke-width="1"/>
<line x1="82" y1="525.2" x2="88" y2="525.2" stroke="#5e5e5e" stroke-width="1"/>
<line x1="85" y1="529.3" x2="88" y2="529.3" stroke="#4c4c4c" stroke-width="1"/>
<line x1="82" y1="533.5" x2="88" y2="533.5" stroke="#5e5e5e" stroke-width="1"/>
<line x1="85" y1="537.6" x2="88" y2="537.6" stroke="#4c4c4c" stroke-width="1"/>
<text x="73.3" y="485.9" font-size="10">7</text>
<text x="73.3" y="497.1" font-size="10">0</text>
<line x1="72" y1="541.7" x2="88" y2="541.7" stroke="#646464" stroke-width="1"/>
<line x1="85" y1="545.8" x2="88" y2="545.8" stroke="#4c4c4c" stroke-width="1"/>
<line x1="82" y1="549.9" x2="88" y2="549.9" stroke="#5e5e5e" stroke-width="1"/>
<line x1="85" y1="554.0" x2="88" y2="554.0" stroke="#4c4c4c" stroke-width="1"/>
<line x1="82" y1="558.1" x2="88" y2="558.1" stroke="#5e5e5e" stroke-width="1"/>
<line x1="85" y1="562.2" x2="88" y2="562.2" stroke="#4c4c4c" stroke-width="1"/>
<line x1="82" y1="566.3" x2="88" y2="566.3" stroke="#5e5e5e" stroke-width="1"/>
<line x1="85" y1="570.5" x2="88" y2="570.5" stroke="#4c4c4c" stroke-width="1"/>
<line x1="82" y1="574.6" x2="88" y2="574.6" stroke="#5e5e5e" stroke-width="1"/>
<line x1="85" y1="578.7" x2="88" y2="578.7" stroke="#4c4c4c" stroke-width="1"/>
<text x="73.3" y="527.0" font-size="10">8</text>
<text x="73.3" y="538.2" font-size="10">0</text>
<line x1="72" y1="582.8" x2="88" y2="582.8" stroke="#646464" stroke-width="1"/>
<line x1="85" y1="586.9" x2="88" y2="586.9" stroke="#4c4c4c" stroke-width="1"/>
<line x1="82" y1="591.0" x2="88" y2="591.0" stroke="#5e5e5e" stroke-width="1"/>
<line x1="85" y1="595.1" x2="88" y2="595.1" stroke="#4c4c4c" stroke-width="1"/>
<line x1="82" y1="599.2" x2="88" y2="599.2" stroke="#5e5e5e" stroke-width="1"/>
<line x1="85" y1="603.3" x2="88" y2="603.3" stroke="#4c4c4c" stroke-width="1"/>
<line x1="82" y1="607.5" x2="88" y2="607.5" stroke="#5e5e5e" stroke-width="1"/>
<line x1="85" y1="611.6" x2="88" y2="611.6" stroke="#4c4c4c" stroke-width="1"/>
<line x1="82" y1="615.7" x2="88" y2="615.7" stroke="#5e5e5e" stroke-width="1"/>
<line x1="85" y1="619.8" x2="88" y2="619.8" stroke="#4c4c4c" stroke-width="1"/>
<text x="73.3" y="568.1" font-size="10">9</text>
<text x="73.3" y="579.3" font-size="10">0</text>
<line x1="72" y1="623.9" x2="88" y2="623.9" stroke="#646464" stroke-width="1"/>
<line x1="85" y1="628.0" x2="88" y2="628.0" stroke="#4c4c4c" stroke-width="1"/>
<line x1="82" y1="632.1" x2="88" y2="632.1" stroke="#5e5e5e" stroke-width="1"/>
<line x1="85" y1="636.2" x2="88" y2="636.2" stroke="#4c4c4c" stroke-width="1"/>
<line x1="82" y1="640.3" x2="88" y2="640.3" stroke="#5e5e5e" stroke-width="1"/>
<line x1="85" y1="644.5" x2="88" y2="644.5" stroke="#4c4c4c" stroke-width="1"/>
<line x1="82" y1="648.6" x2="88" y2="648.6" stroke="#5e5e5e" stroke-width="1"/>
<line x1="85" y1="652.7" x2="88" y2="652.7" stroke="#4c4c4c" stroke-width="1"/>
<line x1="82" y1="656.8" x2="88" y2="656.8" stroke="#5e5e5e" stroke-width="1"/>
<text x="73.3" y="598.0" font-size="10">1</text>
<text x="73.3" y="609.2" font-size="10">0</text>
<text x="73.3" y="620.4" font-size="10">0</text>
<text x="73.3" y="639.1" font-size="10">1</text>
<text x="73.3" y="650.3" font-size="10">1</text>
<text x="73.3" y="661.5" font-size="10">0</text>
 <rect x="72" y="92" width="16" height="16" fill="#393939" fill-opacity="0"/>
 <line x1="72" y1="96.5" x2="88" y2="96.5" stroke="#6a6a6a" stroke-width="1"/>
</svg>
<!-- ===== ARTBOARD ===== -->
<svg class="a" style="left:0;top:0" width="1000" height="659">
 <rect x="241" y="205" width="633" height="427" fill="none" stroke="#b53842" stroke-width="2"/>
 <rect x="249.5" y="213.5" width="617" height="411" fill="#fafae1" stroke="#151515" stroke-width="1"/>
 <polygon points="250,215.7 866,347.7 866,581 250,448.2" fill="#2ba4df"/>
 <g stroke="#66e6f2" stroke-width="1" stroke-opacity="0.85">
  <line x1="446.5" y1="108" x2="446.5" y2="659"/><line x1="455.5" y1="108" x2="455.5" y2="659"/><line x1="462.5" y1="108" x2="462.5" y2="659"/>
  <line x1="652.5" y1="108" x2="652.5" y2="659"/><line x1="660.5" y1="108" x2="660.5" y2="659"/><line x1="668.5" y1="108" x2="668.5" y2="659"/>
 </g>
 <path d="M867,621 L869,630 L871,630 Z M871,621 L873,630 L875,630 Z" fill="#f2e8ee"/>
 <path d="M861,583 L866,581 L866,603 L860,599 L856,591 Z" fill="#f4f4ee" fill-opacity="0.75"/>
 <line x1="260.5" y1="496.7" x2="429.5" y2="496.7" stroke="#3b97d2" stroke-width="3.6" stroke-linecap="round"/>
</svg>
<div class="t" style="left:263px;top:512px;font-size:17.4px;line-height:20px;color:#3572b0">Name</div>
<div class="t" style="left:263px;top:543px;font-size:17.4px;line-height:20px;color:#3572b0">Number</div>
<div class="t" style="left:263px;top:575px;font-size:17.4px;line-height:20px;color:#3572b0">Address</div>
<!-- ===== TOOLBAR ===== -->
<div class="a" style="left:0;top:64px;width:70px;height:595px;background:#535353"></div>
<div class="a" style="left:0;top:64px;width:70px;height:11px;background:#474747"></div>
<div class="a" style="left:70px;top:64px;width:2px;height:595px;background:#3a3a3a"></div>
<div class="a" style="left:3px;top:76px;width:65px;height:600px;border:1px solid #5a5a5a;border-radius:2px;background:#535353"></div>
<svg class="a" style="left:0;top:0" width="72" height="659">
 <path d="M9,66.5 L6,69.5 L9,72.5 Z M13,66.5 L10,69.5 L13,72.5 Z" fill="#cfcfcf"/>
 <rect x="24" y="79" width="22" height="2.5" fill="#4a4a4a"/>

 <rect x="7.5" y="95.5" width="26" height="20" rx="2" fill="#323232"/>
 <g fill="#d6d6d6" stroke="none">
  <!-- flyout triangles -->
  <path d="M63,112 L63,115 L60,115 Z"/>
  <path d="M33,159 L33,162 L30,162 Z"/>
  <path d="M33,182 L33,185 L30,185 Z"/><path d="M63,182 L63,185 L60,185 Z"/>
  <path d="M33,206 L33,209 L30,209 Z"/><path d="M63,206 L63,209 L60,209 Z"/>
  <path d="M33,229 L33,232 L30,232 Z"/><path d="M63,229 L63,232 L60,232 Z"/>
  <path d="M33,253 L33,256 L30,256 Z"/><path d="M63,253 L63,256 L60,256 Z"/>
  <path d="M33,276 L33,279 L30,279 Z"/><path d="M63,276 L63,279 L60,279 Z"/>
  <path d="M33,300 L33,303 L30,303 Z"/><path d="M63,300 L63,303 L60,303 Z"/>
  <path d="M33,347 L33,350 L30,350 Z"/>
  <path d="M33,370 L33,373 L30,373 Z"/><path d="M63,370 L63,373 L60,373 Z"/>
  <path d="M63,394 L63,397 L60,397 Z"/>
  <path d="M33,417 L33,420 L30,420 Z"/>
 </g>
 <!-- selection -->
 <path d="M16.5,98.5 L16.5,113 L20.5,109.5 L27,109.5 Z" fill="none" stroke="#dcdcdc" stroke-width="1.3" stroke-linejoin="round"/>
 <path d="M44.5,98 L44.5,114 L48.5,110 L56.5,110 Z" fill="#d4d4d4"/>
 <!-- magic wand -->
 <line x1="13.5" y1="137" x2="24" y2="126" stroke="#d8d8d8" stroke-width="2"/>
 <g fill="#d8d8d8"><circle cx="17" cy="124" r="1.4"/><circle cx="26.5" cy="122.5" r="1.4"/><circle cx="27" cy="128.5" r="1.4"/></g>
 <!-- lasso -->
 <path d="M50,130 C44,130 41,127 42,124 C43,121 50,120 55,122 C58,123.5 57,126 55,127" fill="none" stroke="#d4d4d4" stroke-width="1.4"/>
 <path d="M49,124 L49,136 L52,133 L57,133 Z" fill="#d4d4d4"/>
 <path d="M46,130 C44,132 45,135 47,136" fill="none" stroke="#d4d4d4" stroke-width="1.2"/>
 <!-- pen -->
 <path d="M12.5,160.5 C12.5,156 14,151.5 17.5,149.5 L22,147.5 L26.5,152 L24.5,156.5 C22.5,159.5 17.5,160.5 12.5,160.5 Z" fill="#d6d6d6"/>
 <path d="M21,147 L24.5,143.5 L29,148 L25.5,151.5 Z" fill="#d6d6d6"/>
 <path d="M13,160 L18.5,154.5" stroke="#6a6a6a" stroke-width="1"/>
 <circle cx="19" cy="154" r="1" fill="#6a6a6a"/>
 <!-- curvature pen -->
 <path d="M43.5,160.5 C43.5,156 45,151.5 48.5,149.5 L53,147.5 L57.5,152 L55.5,156.5 C53.5,159.5 48.5,160.5 43.5,160.5 Z" fill="#d6d6d6"/>
 <path d="M52,147 L55.5,143.5 L60,148 L56.5,151.5 Z" fill="#d6d6d6"/>
 <path d="M45,146 C41,149 42,153 43.5,155 C44.5,157 43,159 43,161" fill="none" stroke="#d0d0d0" stroke-width="1.2"/>
 <!-- type -->
 <path d="M13,168.5 L28,168.5 L28,172 L26.5,172 L26.5,170.5 L21.8,170.5 L21.8,181.5 L24,181.5 L24,183 L17,183 L17,181.5 L19.2,181.5 L19.2,170.5 L14.5,170.5 L14.5,172 L13,172 Z" fill="#dcdcdc"/>
 <!-- line -->
 <line x1="42" y1="183.5" x2="57" y2="168.5" stroke="#d4d4d4" stroke-width="1.4"/>
 <!-- rect -->
 <rect x="13.5" y="192.5" width="15" height="14" fill="#6c6c6c" stroke="#d4d4d4" stroke-width="1.2"/>
 <!-- brush -->
 <path d="M43,207 C43,203 45,201 47,201 L56,192 L58,194 L49,203 C49,205 47,207 43,207 Z" fill="#d4d4d4"/>
 <!-- pencil -->
 <path d="M13,230 L14.5,225 L24.5,215 L28,218.5 L18,228.5 Z" fill="#d4d4d4"/>
 <!-- eraser -->
 <path d="M43,225 L53,215 L58.5,220.5 L48.5,230.5 Z" fill="#d4d4d4"/>
 <path d="M45.5,222.5 L51,228" stroke="#535353" stroke-width="1.4"/>
 <!-- rotate -->
 <path d="M16,242 C20,237 28,240 27,247 C26,253 17,253 15,248" fill="none" stroke="#cfcfcf" stroke-width="1.8"/>
 <path d="M13,239 L19,239 L16,244 Z" fill="#cfcfcf"/>
 <!-- scale -->
 <rect x="42.5" y="244.5" width="8" height="8" fill="none" stroke="#d4d4d4" stroke-width="1.1"/>
 <rect x="46.5" y="238.5" width="11" height="10" fill="none" stroke="#d4d4d4" stroke-width="1.1"/>
 <path d="M50,245 L55,240 M52,240 L55,240 L55,243" stroke="#d4d4d4" stroke-width="1.1" fill="none"/>
 <!-- warp / width -->
 <path d="M14.5,266 C17,263 19,266 18,268 C20,270 23,267 25,268 C27,269 29,270 29,272 C27,272 26,270 24,271 C22,273 19,273 17,272 L14,276" fill="none" stroke="#d4d4d4" stroke-width="2.2" stroke-linecap="round" stroke-linejoin="round"/>
 <circle cx="15" cy="265.5" r="2" fill="#d4d4d4"/>
 <circle cx="13.8" cy="275.5" r="1.7" fill="#d4d4d4"/>
 <circle cx="21" cy="264" r="1" fill="#bdbdbd"/>
 <!-- puppet pin -->
 <path d="M47,266.5 L52.5,261 L57,265.5 L51.5,271 Z" fill="#d4d4d4"/>
 <path d="M46,265 L52.5,271.5" stroke="#d4d4d4" stroke-width="1.5"/>
 <line x1="42.5" y1="276.5" x2="48.5" y2="270.5" stroke="#d4d4d4" stroke-width="1.8"/>
 <!-- shape builder -->
 <path d="M13,291 C12,287 17,285.5 22,286 C28,286.5 30,289 29.5,292 C29,295 25,297 20,297.5 C15,298 13.5,295 13,291 Z" fill="none" stroke="#d0d0d0" stroke-width="1.3"/>
 <line x1="14" y1="292" x2="26" y2="292" stroke="#a8a8a8" stroke-width="1"/>
 <path d="M23.5,292.5 L23.5,302.5 L26,300 L30.5,300.5 Z" fill="#d8d8d8"/>
 <!-- perspective grid -->
 <path d="M42.5,286 L42.5,301 L57,301 M42.5,286 L48,289 L48,301 M42.5,291 L52,296 M42.5,296 L57,301 M48,289 L57,297" fill="none" stroke="#d4d4d4" stroke-width="1"/>
 <!-- mesh -->
 <rect x="13.5" y="310.5" width="14" height="13" fill="none" stroke="#d4d4d4" stroke-width="1.1"/>
 <path d="M17,310 C18,314 16,318 19,324 M24,310 C22,314 25,318 23,324 M13,315 C17,316 21,314 28,316 M13,320 C17,319 21,321 28,320" fill="none" stroke="#d0d0d0" stroke-width="0.9"/>
 <!-- gradient -->
 <defs><linearGradient id="gr" x1="0" y1="0" x2="1" y2="0.4"><stop offset="0" stop-color="#2a2a2a"/><stop offset="1" stop-color="#eeeeee"/></linearGradient>
 <linearGradient id="gr2" x1="0" y1="0" x2="1" y2="0"><stop offset="0" stop-color="#f4f4f4"/><stop offset="1" stop-color="#1a1a1a"/></linearGradient></defs>
 <rect x="42.5" y="310.5" width="14" height="13" fill="url(#gr)" stroke="#d4d4d4" stroke-width="1.1"/>
 <!-- eyedropper -->
 <path d="M13,348 L14,344 L23,335 L26,338 L17,347 Z" fill="none" stroke="#d4d4d4" stroke-width="1.3"/>
 <path d="M22,334 L25,331 L29,335 L26,338 Z" fill="#d4d4d4"/>
 <!-- blend -->
 <rect x="42" y="332" width="6" height="6" fill="#cfcfcf"/>
 <circle cx="51" cy="338" r="3" fill="none" stroke="#cfcfcf" stroke-width="1.2"/>
 <circle cx="55.5" cy="343" r="3.5" fill="none" stroke="#cfcfcf" stroke-width="1.4"/>
 <!-- symbol sprayer -->
 <rect x="19.5" y="359.5" width="8" height="10" fill="none" stroke="#d4d4d4" stroke-width="1.2"/>
 <rect x="21.5" y="356" width="4" height="3" fill="#d4d4d4"/>
 <circle cx="23.5" cy="364.5" r="2" fill="none" stroke="#d4d4d4" stroke-width="1"/>
 <g fill="#bdbdbd"><rect x="13" y="357" width="1.5" height="1.5"/><rect x="16" y="357" width="1.5" height="1.5"/><rect x="13" y="360" width="1.5" height="1.5"/><rect x="16" y="360" width="1.5" height="1.5"/><rect x="13" y="363" width="1.5" height="1.5"/></g>
 <!-- column graph -->
 <path d="M42.5,356 L42.5,371.5 L58,371.5" fill="none" stroke="#d4d4d4" stroke-width="1.1"/>
 <g fill="none" stroke="#d4d4d4" stroke-width="1"><rect x="45.5" y="364.5" width="2.5" height="7"/><rect x="49.5" y="358.5" width="2.5" height="13"/><rect x="53.5" y="361.5" width="2.5" height="10"/></g>
 <!-- artboard -->
 <path d="M17.5,379 L17.5,395.5 L28,395.5 L28,385 L24.5,381.5 L14,381.5" fill="none" stroke="#d4d4d4" stroke-width="1.1"/>
 <rect x="18.5" y="386" width="8" height="8" fill="#7a7a7a"/>
 <!-- slice / knife -->
 <path d="M43,395 L45,389 L54,380 L57.5,383.5 L48.5,392.5 Z" fill="none" stroke="#d4d4d4" stroke-width="1.3"/>
 <!-- hand -->
 <path d="M17,420 C15,418 12.5,414.5 11.5,412.5 C11,411.3 12.6,410.5 13.5,411.5 L15.5,413.5 L15,406 C14.9,404.7 16.9,404.6 17,406 L17.6,410.5 L17.8,403.5 C17.8,402.2 19.8,402.2 19.8,403.5 L20,410.5 L21,404.2 C21.2,403 23,403.2 22.9,404.5 L22.3,411 L24.5,406.5 C25,405.4 26.6,406 26.3,407.2 L24.5,414.5 C24,417 23,419 22,420 Z" fill="#d8d8d8"/>
 <!-- zoom -->
 <circle cx="49.5" cy="409.5" r="5.3" fill="none" stroke="#d8d8d8" stroke-width="1.5"/>
 <line x1="53.5" y1="413.5" x2="57.5" y2="418.5" stroke="#d8d8d8" stroke-width="2.2"/>
 <!-- fill / stroke big -->
 <rect x="7" y="431" width="33" height="34" fill="#2ca5e1" stroke="#e6f4fb" stroke-width="1"/>
 <rect x="23.5" y="448.5" width="35" height="34" fill="#f6f6f6"/>
 <rect x="33.5" y="458.5" width="15" height="16" fill="#545454"/>
 <rect x="23.5" y="448.5" width="35" height="34" fill="none" stroke="#3c3c3c" stroke-width="1"/>
 <line x1="24" y1="482" x2="58" y2="449" stroke="#e2222a" stroke-width="2.2"/>
 <rect x="7" y="431" width="33" height="34" fill="#2ca5e1" stroke="#e6f4fb" stroke-width="1"/>
 <!-- swap arrow -->
 <path d="M51.5,434.5 C56,434 58,436 58.5,439" fill="none" stroke="#d4d4d4" stroke-width="2"/>
 <path d="M49,434.5 L53,431 L53,438 Z M55,438.5 L62,438.5 L58.5,442.5 Z" fill="#d4d4d4"/>
 <!-- default -->
 <rect x="11" y="474.5" width="6" height="6" fill="#111" stroke="#e0e0e0" stroke-width="1"/>
 <rect x="7.5" y="471.5" width="6" height="6" fill="#f0f0f0" stroke="#111" stroke-width="1"/>
 <!-- color mode buttons -->
 <rect x="7.5" y="492.5" width="16" height="15" fill="#333"/>
 <rect x="10" y="495" width="11" height="10" fill="#2ca5e1"/>
 <rect x="28.5" y="493.5" width="12" height="13" fill="url(#gr2)" stroke="#111" stroke-width="1.2"/>
 <rect x="48.5" y="493.5" width="12" height="13" fill="#fafafa" stroke="#111" stroke-width="1.2"/>
 <line x1="49" y1="506" x2="60" y2="494" stroke="#e0202a" stroke-width="2"/>
 <!-- draw modes -->
 <rect x="7.5" y="515.5" width="16" height="15" fill="#303030"/>
 <rect x="11.5" y="519" width="6" height="7" fill="none" stroke="#d8d8d8" stroke-width="1.2"/>
 <rect x="15" y="522" width="5" height="6" fill="#d8d8d8"/>
 <rect x="30.5" y="519" width="6" height="7" fill="none" stroke="#c0c0c0" stroke-width="1.1"/>
 <rect x="34" y="522" width="5" height="6" fill="#c8c8c8"/>
 <circle cx="54.5" cy="522.5" r="4.5" fill="none" stroke="#6c6c6c" stroke-width="1"/>
 <!-- screen mode -->
 <rect x="24.5" y="543.5" width="11" height="12" fill="#8a8a8a" stroke="#d0d0d0" stroke-width="1"/>
 <rect x="31.5" y="540.5" width="15" height="11" fill="#7a7a7a" stroke="#d6d6d6" stroke-width="1"/>
 <rect x="31.5" y="540.5" width="15" height="2.5" fill="#d6d6d6"/>
 <!-- dots -->
 <g fill="#d6d6d6"><circle cx="30" cy="580" r="1.3"/><circle cx="35.3" cy="580" r="1.3"/><circle cx="40.6" cy="580" r="1.3"/></g>

</svg>
</body></html>
